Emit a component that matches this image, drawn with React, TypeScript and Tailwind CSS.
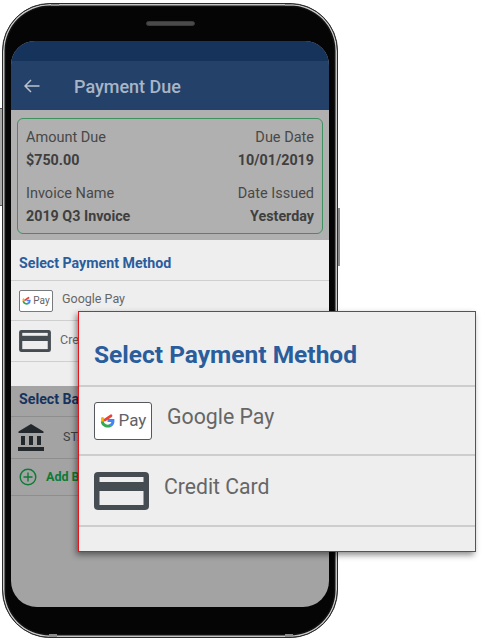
const ROBOTO = 'font-[Roboto,sans-serif]';

function GoogleG({ size }: { size: number }) {
  return (
    <svg width={size} height={size} viewBox="0 0 24 24" fill="none" strokeWidth="4.600" className="shrink-0">
      <path d="M4 8.500v5" stroke="#f4b400" strokeLinecap="round" />
      <path d="M3.500 13.500a8.800 8.800 0 0 0 13.500 6" stroke="#34a853" />
      <path d="M16.500 20a8.500 8.500 0 0 0 4.300-8H12" stroke="#4285f4" />
      <path d="M8 11 17.500 4.500" stroke="#ea4335" strokeLinecap="round" />
    </svg>
  );
}

function PayBadge({ large }: { large?: boolean }) {
  return (
    <div
      className={
        large
          ? 'flex h-[38px] w-[58px] shrink-0 items-center justify-center gap-[4px] rounded-[3px] border border-[#55595d] bg-white'
          : 'flex h-[22px] w-[34px] shrink-0 items-center justify-center gap-[2px] rounded-[2px] border border-[#777b7e] bg-white'
      }
    >
      <GoogleG size={large ? 15 : 9} />
      <span className={large ? 'text-[17px] leading-none text-[#5f6368]' : 'text-[10px] leading-none text-[#5f6368]'}>Pay</span>
    </div>
  );
}

function CardIcon({ width, height }: { width: number; height: number }) {
  return (
    <svg width={width} height={height} viewBox="0 0 55 38" className="shrink-0">
      <rect width="55" height="38" rx="4" fill="#454c52" />
      <rect x="5.500" y="5" width="44" height="5" fill="#eeeeee" />
      <rect x="5.500" y="19" width="44" height="14" fill="#eeeeee" />
    </svg>
  );
}

function BankIcon() {
  return (
    <svg width="26" height="27" viewBox="0 0 26 27" className="shrink-0">
      <path d="M13 0 25.500 7.500V9H.500V7.500Z" fill="#23282c" />
      <rect x="3" y="12" width="4" height="9" fill="#23282c" />
      <rect x="11" y="12" width="4" height="9" fill="#23282c" />
      <rect x="19" y="12" width="4" height="9" fill="#23282c" />
      <rect x="0" y="23" width="26" height="4" fill="#23282c" />
    </svg>
  );
}

function AddIcon() {
  return (
    <svg width="18" height="18" viewBox="0 0 18 18" fill="none" stroke="#0d7a37" strokeWidth="1.400" className="shrink-0">
      <circle cx="9" cy="9" r="7.800" />
      <path d="M9 4.500v9M4.500 9h9" />
    </svg>
  );
}

function SummaryCell({ label, value, right }: { label: string; value: string; right?: boolean }) {
  return (
    <div className={right ? 'flex flex-col gap-[4px] text-right' : 'flex flex-col gap-[4px]'}>
      <span className="text-[14.500px] leading-[19px] text-[#484848]">{label}</span>
      <span className="text-[14.300px] font-bold leading-[19px] text-[#3f3f3f]">{value}</span>
    </div>
  );
}

export default function App() {
  return (
    <div className={`relative h-[641px] w-[484px] overflow-hidden bg-white pl-[2px] pt-[3px] ${ROBOTO}`}>
      {/* side buttons */}
      <div className="absolute left-0 top-[108px] h-[98px] w-[2px] border-y border-[#555555] bg-[#a8a8a8]" />
      <div className="absolute left-[338px] top-[208px] h-[58px] w-[2px] bg-[#8a8a8a]" />

      {/* phone body */}
      <div className="relative flex h-[635px] w-[336px] flex-col rounded-[48px] border border-[#2a2a2a] bg-[#050505] px-[8px] pt-[37px] shadow-[inset_0_0_0_1.500px_#c6c6c6,inset_0_0_0_3px_#111111]">
        <div className="absolute left-[48px] top-[0px] h-[2px] w-[8px] bg-[#8c8c8c]" />
        <div className="absolute left-[282px] top-[0px] h-[2px] w-[8px] bg-[#8c8c8c]" />
        <div className="absolute bottom-[0px] left-[46px] h-[3px] w-[8px] bg-[#8c8c8c]" />
        <div className="absolute bottom-[0px] left-[282px] h-[3px] w-[8px] bg-[#8c8c8c]" />
        <div className="absolute left-[143px] top-[17px] h-[5px] w-[49px] rounded-full border border-[#3a3a3a] bg-[#4a4a4a]" />

        {/* screen */}
        <div className="flex h-[566px] flex-col overflow-hidden rounded-b-[26px] rounded-t-[24px] bg-[#a3a3a3]">
          <div className="h-[20px] shrink-0 bg-[#16335b]" />
          <div className="flex h-[49px] shrink-0 items-center gap-[34px] bg-[#244169] pl-[13px]">
            <svg width="16" height="14" viewBox="0 0 16 14" fill="none" stroke="#b9c3cf" strokeWidth="1.500">
              <path d="M15.500 7H1.200M7 1 1 7l6 6" />
            </svg>
            <h1 className="pt-[2px] text-[18px] font-medium leading-none text-[#a9b5c6]">Payment Due</h1>
          </div>

          <div className="h-[130px] shrink-0 bg-[#b0b0b0] px-[6px] pt-[8px]">
            <div className="grid h-[116px] grid-cols-2 content-between rounded-[6px] border border-[#3f9160] px-[8px] pb-[7px] pt-[9px]">
              <SummaryCell label="Amount Due" value="$750.00" />
              <SummaryCell label="Due Date" value="10/01/2019" right />
              <SummaryCell label="Invoice Name" value="2019 Q3 Invoice" />
              <SummaryCell label="Date Issued" value="Yesterday" right />
            </div>
          </div>

          <div className="h-[146px] shrink-0 bg-[#eeeeee]">
            <div className="flex h-[41px] items-center border-b border-[#cfcfcf] pl-[8px] pt-[6px]">
              <h2 className="text-[14.200px] font-bold leading-none text-[#2a5d9c]">Select Payment Method</h2>
            </div>
            <div className="flex h-[40px] items-center gap-[9px] border-b border-[#cfcfcf] pl-[8px]">
              <PayBadge />
              <span className="pb-[2px] text-[12.500px] text-[#666666]">Google Pay</span>
            </div>
            <div className="flex h-[41px] items-center gap-[9px] border-b border-[#cfcfcf] pl-[8px]">
              <CardIcon width={32} height={22} />
              <span className="pb-[2px] text-[12.500px] text-[#666666]">Credit Card</span>
            </div>
          </div>

          <div className="flex h-[31px] shrink-0 items-center border-b border-[#8e8e8e] pb-[3px] pl-[8px]">
            <h2 className="text-[14.200px] font-bold leading-none text-[#15335e]">Select Bank Account</h2>
          </div>
          <div className="flex h-[42px] shrink-0 items-center gap-[19px] border-b border-[#8e8e8e] pl-[7px]">
            <BankIcon />
            <span className="text-[12.500px] text-[#3f3f3f]">STATE BANK</span>
          </div>
          <div className="flex h-[37px] shrink-0 items-center gap-[9px] border-b border-[#8e8e8e] pl-[8px]">
            <AddIcon />
            <span className="text-[12.500px] font-bold text-[#0d7a37]">Add Bank Account</span>
          </div>
        </div>
      </div>

      {/* magnified callout */}
      <div className="absolute left-[78px] top-[311px] h-[241px] w-[398px] border border-[#e8141c] bg-[#eeeeee] shadow-[-2px_3px_6px_rgba(0,0,0,0.45)]">
        <div className="flex h-[75px] items-end border-b-2 border-[#cdcdcd] pb-[18px] pl-[15px]">
          <h2 className="text-[24.500px] font-bold leading-none text-[#2a5d9c]">Select Payment Method</h2>
        </div>
        <div className="flex h-[69px] items-center gap-[15px] border-b-2 border-[#cdcdcd] pl-[15px]">
          <PayBadge large />
          <span className="pb-[8px] text-[21.300px] leading-none text-[#666666]">Google Pay</span>
        </div>
        <div className="flex h-[71px] items-center gap-[15px] border-b-2 border-[#cdcdcd] pl-[15px]">
          <CardIcon width={55} height={38} />
          <span className="pb-[8px] text-[21.200px] leading-none text-[#666666]">Credit Card</span>
        </div>
      </div>
    </div>
  );
}
